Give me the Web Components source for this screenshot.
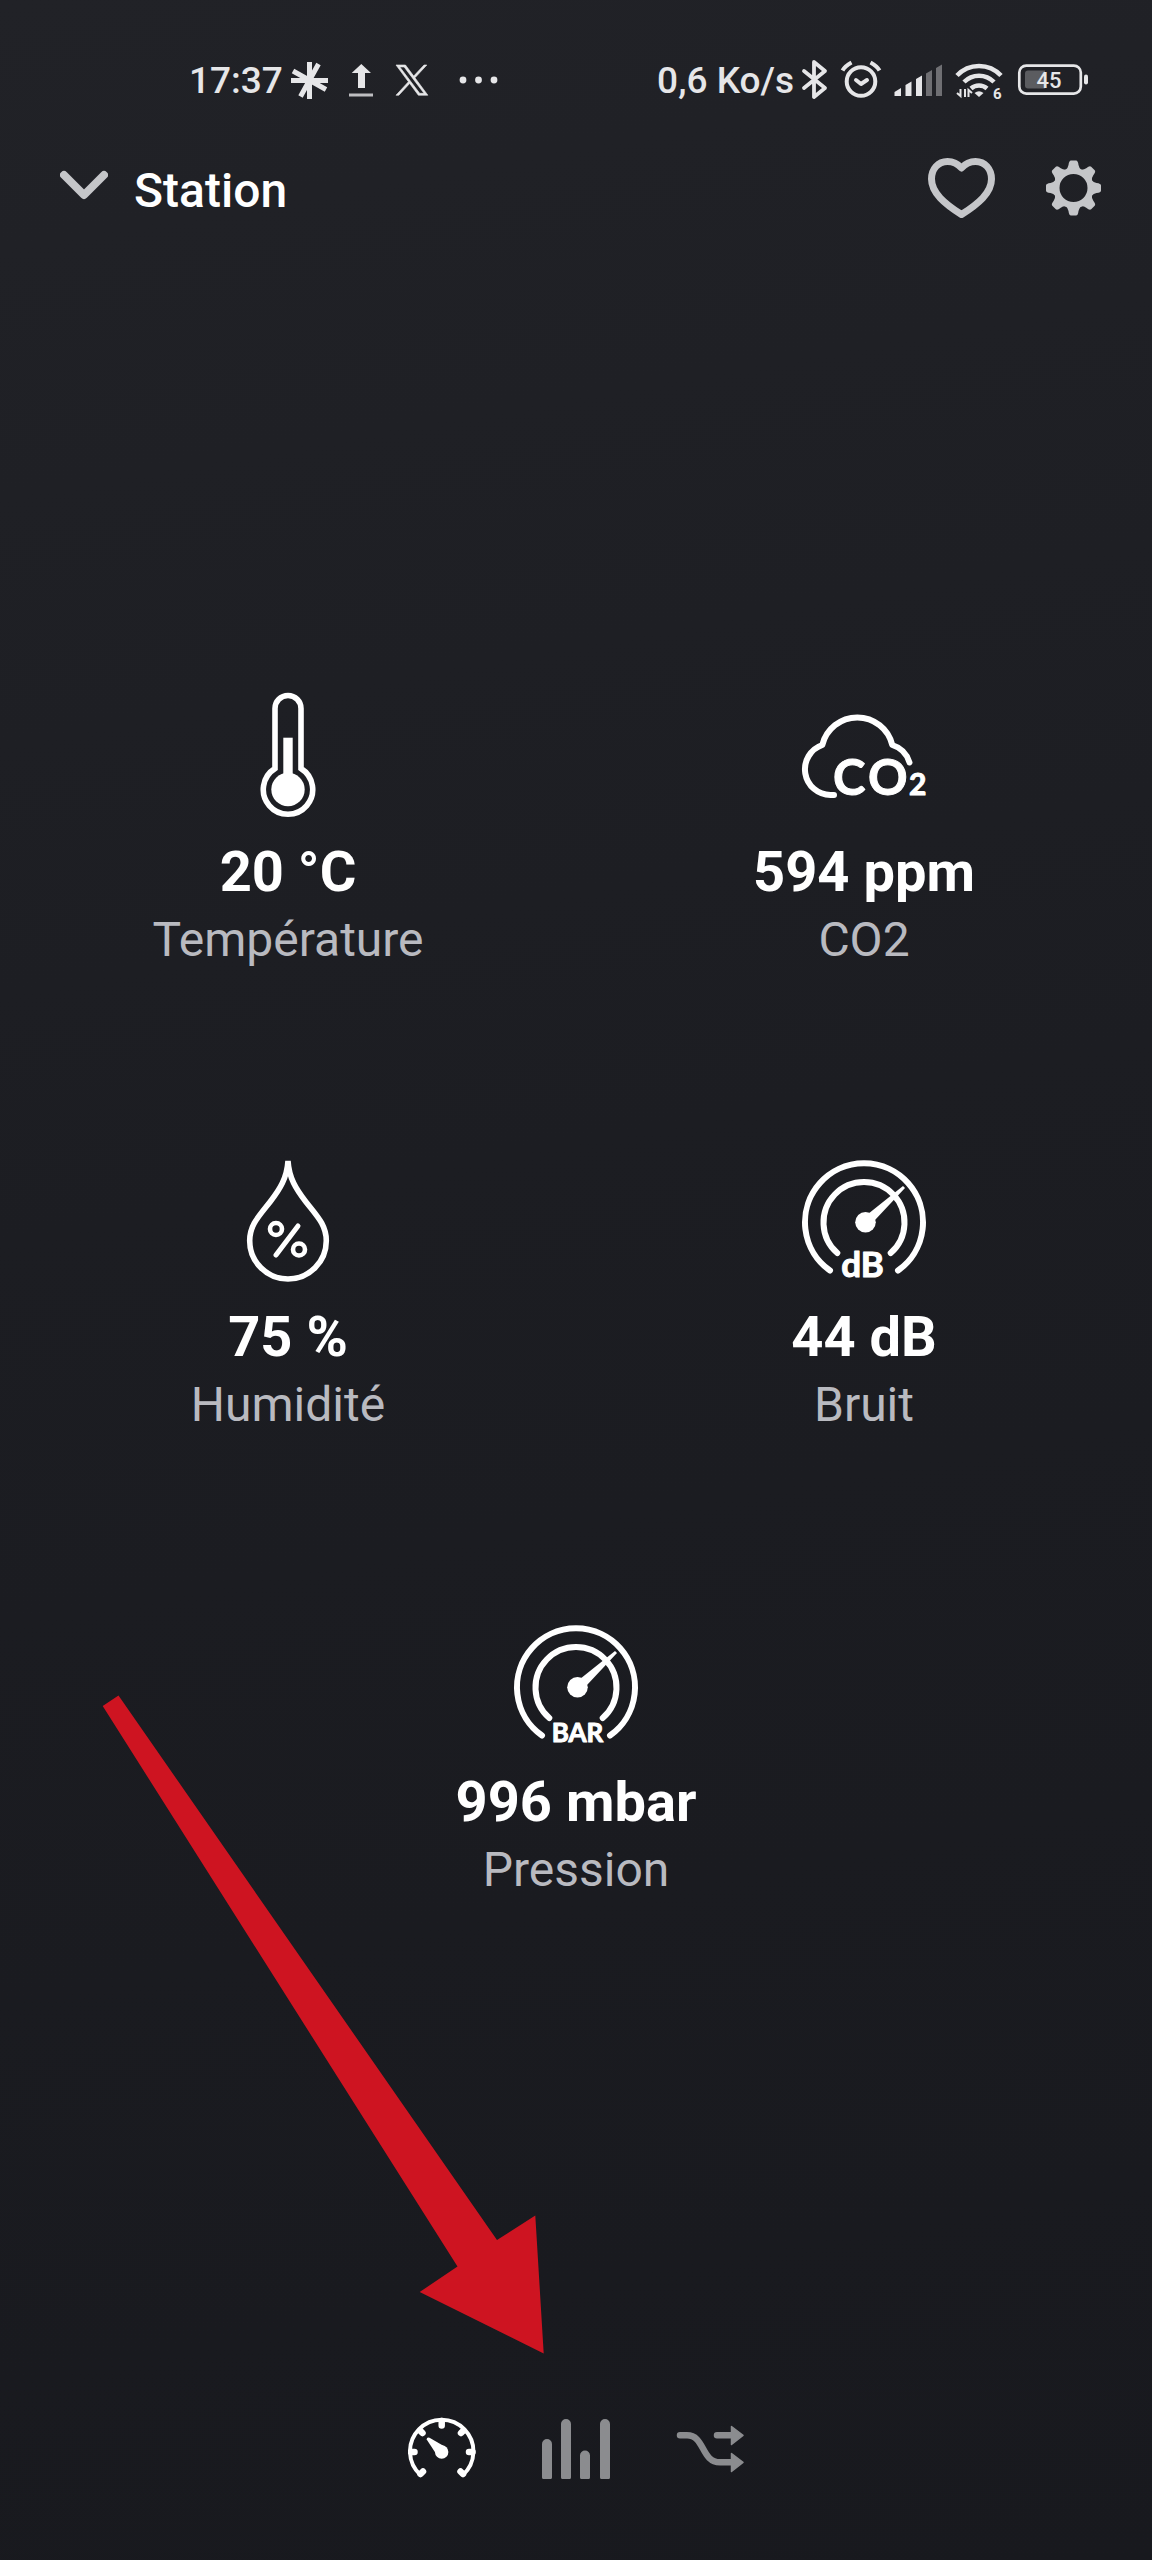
<!DOCTYPE html>
<html lang="fr">
<head>
<meta charset="utf-8">
<meta name="viewport" content="width=device-width, initial-scale=1">
<title>Station</title>
<style>
  html, body { margin: 0; background: #18191e; }
  body { font-family: Roboto, "Liberation Sans", sans-serif; color: #fff; }
</style>
</head>
<body>
<station-screen></station-screen>

<script>
function define(name, markup, setup) {
  const template = document.createElement('template');
  template.innerHTML = markup;
  customElements.define(name, class extends HTMLElement {
    connectedCallback() {
      if (this.shadowRoot) return;
      const root = this.attachShadow({ mode: 'open' });
      root.append(template.content.cloneNode(true));
      if (setup) setup(this, root);
    }
  });
}

/* System status bar */
define('status-bar', `
  <style>
    :host { display: flex; align-items: center; justify-content: space-between; height: 48px;
            padding: 57px 63px 0 189px; color: #e6e6e8; font-size: 37px; line-height: 48px; font-weight: 500; }
    div { display: flex; align-items: center; gap: 10px; }
    .left, .rate { gap: 8px; }
    svg { display: block; height: 40px; overflow: visible; fill: currentColor; }
    .line { fill: none; stroke: currentColor; }
    span { white-space: nowrap; }
  </style>
  <div class="left">
    <span>17:37</span>
    <svg width="38" viewBox="291 61 38 40" aria-hidden="true"><path class="line" stroke-width="5" d="M309.500 62V99M291 80.500H328M300.500 96.500L318.500 64M293 71L326 89.500"/></svg>
    <svg width="50" viewBox="337 61 50 40" aria-hidden="true"><path d="M361.300 64L371 73H365V88H358V73H351.700Z"/><path opacity=".8" d="M349 93.500H373V96.500H349Z"/></svg>
    <svg width="38" viewBox="395 61 38 40" aria-hidden="true"><path stroke="currentColor" stroke-width=".5" transform="translate(396 65) scale(1.330 1.260)" d="M14.258 10.152L23.176 0h-2.113l-7.747 8.813L7.133 0H0l9.352 13.328L0 23.973h2.113l8.176-9.309 6.531 9.309h7.133zm-2.895 3.293l-.949-1.328L2.875 1.560h3.246l6.086 8.523.945 1.328 7.910 11.078h-3.246z"/></svg>
    <svg width="60" viewBox="441 61 60 40" aria-hidden="true"><circle cx="463" cy="80" r="3.400"/><circle cx="478.500" cy="80" r="3.400"/><circle cx="494" cy="80" r="3.400"/></svg>
  </div>
  <div>
    <div class="rate">
    <span>0,6 Ko/s</span>
    <svg width="27" viewBox="802 61 27 40" aria-hidden="true"><path class="line" stroke-width="3.800" stroke-linejoin="round" stroke-linecap="round" d="M804 71L825 88L814 97V62L825 71L804 88"/></svg>
    </div>
    <svg width="42" viewBox="839 61 42 40" aria-hidden="true"><g class="line" stroke-width="4"><circle cx="861" cy="81.500" r="14.300"/><path d="M842.500 70.500Q845 66 851.500 62.500M870.500 62.500Q877 66 879.500 70.500"/><path stroke-linecap="round" stroke-linejoin="round" d="M856 80L861 84L867 80"/></g></svg>
    <svg width="52" viewBox="891 61 52 40" aria-hidden="true"><path d="M894.500 92L901 88V96H894.500ZM905.500 85L911.500 81.500V96H905.500ZM916 79L922 75.500V96H916Z"/><path opacity=".4" d="M926 73.500L932 70V96H926ZM936 68L942 64.500V96H936Z"/></svg>
    <svg width="50" viewBox="953 61 50 40" aria-hidden="true"><path class="line" stroke-width="4.500" d="M957 75.500A30 30 0 0 1 1001 75.500M964 82A21 21 0 0 1 994 82M971 88.500A12 12 0 0 1 987 88.500"/><path d="M974.500 93Q979 89.500 983.500 93L979 97Z"/><path class="line" stroke-width="2" d="M960.500 89V96L957 93M965 89V97M968.500 97V90L972 93"/><text x="993" y="98.500" font-size="15" font-weight="700">6</text></svg>
    <svg width="76" viewBox="1013 61 76 40" aria-hidden="true"><rect class="line" x="1019.300" y="65.600" width="61.500" height="28" rx="7" stroke-width="2.700"/><path opacity=".3" d="M1028 70.500H1045V88.500H1028Q1025 88.500 1025 85.500V73.500Q1025 70.500 1028 70.500Z"/><rect x="1084" y="74.500" width="4" height="10" rx="2"/><text x="1049" y="88" font-size="22" font-weight="500" text-anchor="middle">45</text></svg>
  </div>`);

/* Title row with the room picker and the two actions */
define('app-header', `
  <style>
    :host { display: flex; align-items: center; height: 76px; padding: 48px 50px 0 60px; }
    button { display: flex; align-items: center; padding: 0; border: 0; background: none;
             font: inherit; color: #c5c6c9; cursor: pointer; }
    .room { gap: 26px; }
    .actions { display: flex; gap: 48px; margin-left: auto; }
    h1 { margin: 0; font-size: 48px; line-height: 56px; font-weight: 500; color: #fff; }
    svg { display: block; height: 76px; }
  </style>
  <button class="room" type="button">
    <svg width="48" viewBox="60 153 48 76" aria-hidden="true"><path fill="none" stroke="currentColor" stroke-width="8" stroke-linecap="round" stroke-linejoin="round" d="M64 175L84 195L104 175"/></svg>
    <h1><slot></slot></h1>
  </button>
  <div class="actions">
    <button type="button" aria-label="Favori">
      <svg width="68" viewBox="928 153 68 76"><path fill="none" stroke="currentColor" stroke-width="7" stroke-linejoin="round" d="M961.500 168C957 163 952 161.500 947.500 161.500C938 161.500 931.500 169 931.500 179C931.500 193 945 204 961.500 214.500C978 204 991.500 193 991.500 179C991.500 169 985 161.500 975.500 161.500C971 161.500 966 163 961.500 168Z"/></svg>
    </button>
    <button type="button" aria-label="Paramètres">
      <svg width="58" viewBox="1044 153 58 76">
        <defs><path id="tooth" d="M-8 -18Q-5.500 -20 -5 -23Q-4.500 -27.500 -2.500 -27.500H2.500Q4.500 -27.500 5 -23Q5.500 -20 8 -18Z"/></defs>
        <g transform="translate(1073.500 188)" fill="currentColor">
          <circle r="17" fill="none" stroke="currentColor" stroke-width="6"/>
          <use href="#tooth"/><use href="#tooth" transform="rotate(45)"/><use href="#tooth" transform="rotate(90)"/><use href="#tooth" transform="rotate(135)"/>
          <use href="#tooth" transform="rotate(180)"/><use href="#tooth" transform="rotate(225)"/><use href="#tooth" transform="rotate(270)"/><use href="#tooth" transform="rotate(315)"/>
        </g>
      </svg>
    </button>
  </div>`);

/* Sensor pictograms, each drawn on a 124 x 124 canvas */
const gauge = `
  <g fill="none" stroke="currentColor" stroke-width="6" stroke-linecap="round">
    <path d="M28 112.500A59 59 0 1 1 96 112.500"/><path d="M35.300 95A40.500 40.500 0 1 1 88.700 95"/>
  </g>
  <circle cx="63.500" cy="64.300" r="10.300"/><path d="M66 56L101 28L103 30L73 62Z"/>`;
const sensorIcons = {
  temperature: `
    <path fill="none" stroke="currentColor" stroke-width="5.600" d="M49 75.500V15.500A13 13 0 0 1 75 15.500V75.500A24.700 24.700 0 1 1 49 75.500Z"/>
    <circle cx="62" cy="96.500" r="16.700"/><path d="M57.300 44.700H66.700V84H57.300Z"/>`,
  co2: `
    <path fill="none" stroke="currentColor" stroke-width="6" stroke-linecap="round" stroke-linejoin="round" d="M32 102H28.500A25.700 25.700 0 0 1 20.300 52A36 36 0 0 1 90.300 52A26 26 0 0 1 107.500 69.500"/>
    <text x="31" y="102" font-size="49">C</text><text x="66" y="102" font-size="49">O</text><text x="107" y="102" font-size="30">2</text>`,
  humidity: `
    <g fill="none" stroke="currentColor" stroke-width="5.600" stroke-linecap="round">
      <path d="M62 3C61 20 54 31 44 44C33 58 23.700 67 23.700 82.700A38.300 38.300 0 0 0 100.300 82.700C100.300 67 91 58 80 44C70 31 63 20 62 3Z"/>
      <path stroke-width="5" d="M72 68L50 97"/><circle stroke-width="4.600" cx="50" cy="71" r="6"/><circle stroke-width="4.600" cx="73" cy="91.500" r="6"/>
    </g>`,
  noise: gauge + `<text x="60.500" y="119" font-size="35" text-anchor="middle">dB</text>`,
  pressure: gauge + `<text x="63.500" y="119" font-size="26" text-anchor="middle">BAR</text>`
};
define('sensor-tile', `
  <style>
    :host { display: flex; flex-direction: column; align-items: center; }
    svg { display: block; width: 124px; height: 124px; overflow: visible; fill: currentColor;
          font-family: Lato, sans-serif; font-weight: 700; }
    text { stroke: currentColor; stroke-width: 1px; stroke-linejoin: round; }
    p { margin: 0; white-space: nowrap; }
    .value { margin-top: 21px; font-size: 56px; line-height: 68px; font-weight: 700; }
    .label { margin-top: 6px; font-size: 48px; line-height: 56px; color: #b9bac0; }
  </style>
  <svg viewBox="0 0 124 124" aria-hidden="true"></svg>
  <p class="value"><slot></slot></p>
  <p class="label"></p>`,
  (host, root) => {
    root.querySelector('svg').innerHTML = sensorIcons[host.getAttribute('icon')];
    root.querySelector('.label').textContent = host.getAttribute('label');
  });

define('sensor-grid', `
  <style>
    :host { display: grid; grid-template-columns: 1fr 1fr; row-gap: 190px; }
    ::slotted(:last-child) { grid-column: 1 / -1; }
  </style>
  <slot></slot>`);

/* Bottom navigation */
define('tab-bar', `
  <style>
    :host { display: block; }
    nav { display: flex; justify-content: center; gap: 66px; }
    a { display: block; color: #8b8c8f; }
    a[aria-current] { color: #fff; }
    svg { display: block; width: 68px; height: 68px; fill: currentColor; }
    .line { fill: none; stroke: currentColor; stroke-linecap: round; }
  </style>
  <nav aria-label="Vues">
    <a href="#mesures" aria-label="Mesures" aria-current="page"><svg viewBox="0 0 68 68">
      <path class="line" stroke-width="4" d="M12.500 60A31.700 31.700 0 1 1 54.900 60"/>
      <path class="line" stroke-width="6.500" d="M33.700 6V10.500M3 37H6.500M61 37H64.500M12.500 16L14.500 18M55 16L53 18M12.500 59L15 56.500M55 59L52.500 56.500"/>
      <circle cx="33.700" cy="37" r="6.700"/><path d="M18.700 24.500Q18.500 22 21.500 22.700L37.500 32L29.500 41Z"/></svg></a>
    <a href="#historique" aria-label="Historique"><svg viewBox="0 0 68 68">
      <path d="M0 62.500V29A5 5 0 0 1 10 29V62.500Q10 64 8.500 64H1.500Q0 64 0 62.500ZM19 62.500V9A5 5 0 0 1 29 9V62.500Q29 64 27.500 64H20.500Q19 64 19 62.500ZM38 62.500V40.500A5 5 0 0 1 48 40.500V62.500Q48 64 46.500 64H39.500Q38 64 38 62.500ZM58 62.500V9A5 5 0 0 1 68 9V62.500Q68 64 66.500 64H59.500Q58 64 58 62.500Z"/></svg></a>
    <a href="#scenarios" aria-label="Scénarios"><svg viewBox="0 0 68 68">
      <path class="line" stroke-width="6.500" d="M4 20.300H11C29 20.300 25 47.300 44 47.300H56M41 20.300H56"/>
      <path stroke="currentColor" stroke-width="1.500" stroke-linejoin="round" d="M55.500 11.500L67 20.300L55.500 29.500ZM55.500 38.500L67 47.300L55.500 56.500Z"/></svg></a>
  </nav>`);

/* Red annotation arrow laid over the screen */
define('pointer-arrow', `
  <style>
    :host { position: absolute; left: 102px; bottom: 206px; pointer-events: none; }
    svg { display: block; width: 442px; height: 659px; fill: #ce1421; }
  </style>
  <svg viewBox="102 1695 442 659" aria-hidden="true"><path d="M102.700 1706L118.500 1695.500L497 2240L535.300 2215.500L543.700 2353.500L419.700 2292L457.500 2266.500Z"/></svg>`);

define('station-screen', `
  <style>
    :host { position: relative; display: flex; flex-direction: column; box-sizing: border-box; min-height: 100vh;
            padding-bottom: 77px; background: linear-gradient(170deg, #212227 0%, #1c1d22 45%, #18191e 100%); }
    sensor-grid { margin-top: 464px; }
    tab-bar { margin-top: auto; }
  </style>
  <status-bar></status-bar>
  <app-header>Station</app-header>
  <sensor-grid>
    <sensor-tile icon="temperature" label="Température">20 °C</sensor-tile>
    <sensor-tile icon="co2" label="CO2">594 ppm</sensor-tile>
    <sensor-tile icon="humidity" label="Humidité">75 %</sensor-tile>
    <sensor-tile icon="noise" label="Bruit">44 dB</sensor-tile>
    <sensor-tile icon="pressure" label="Pression">996 mbar</sensor-tile>
  </sensor-grid>
  <tab-bar></tab-bar>
  <pointer-arrow></pointer-arrow>`);
</script>
</body>
</html>
